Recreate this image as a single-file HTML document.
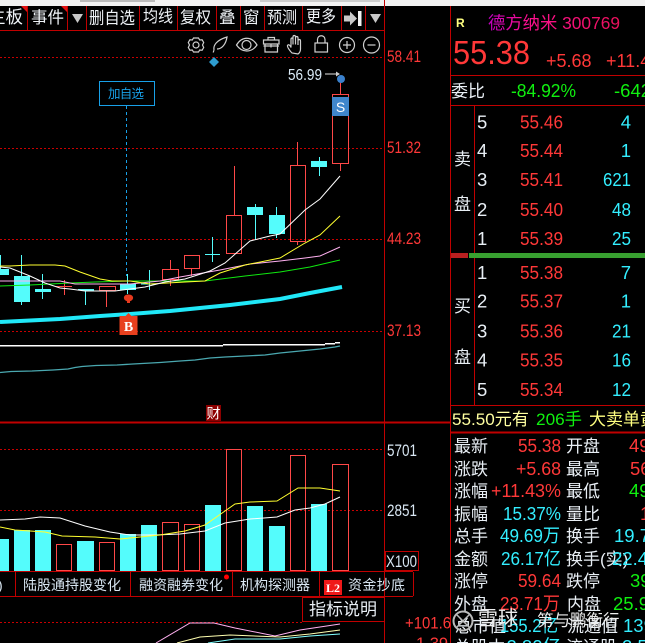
<!DOCTYPE html>
<html><head><meta charset="utf-8"><style>
html,body{margin:0;padding:0;background:#000;width:645px;height:643px;overflow:hidden}
svg{display:block}
text{font-family:"Liberation Sans","Noto Sans CJK SC",sans-serif}
.w{fill:#e8eef4}.r{fill:#ff3838}.c{fill:#33eeff}.g{fill:#10f010}.y{fill:#ffff80}
.t{font-size:16.5px;fill:#eef2f6}
.p{font-size:18.5px;fill:#ff3838}
.n{font-size:18.5px;fill:#e8eef4}
.q{font-size:18.5px;fill:#33eeff;text-anchor:end}
.l{font-size:17px;fill:#e8eef4}
.d{font-size:18.5px}
.v{font-size:18.5px;text-anchor:end}
.a{font-size:16.5px;fill:#ff3838}
.b{font-size:14px;fill:#d8e6f2}
.e{font-size:16.5px;fill:#d8e6f2}
.ln{stroke:#c00000;stroke-width:1;fill:none;shape-rendering:crispEdges}
.dot{stroke:#c80000;stroke-width:1;stroke-dasharray:2 2;fill:none;shape-rendering:crispEdges}
.h{fill:none;stroke:#ff4848;stroke-width:1;shape-rendering:crispEdges}
.k{fill:#54fcfc;shape-rendering:crispEdges}
.s{stroke:#54fcfc;stroke-width:1;shape-rendering:crispEdges}
.sr{stroke:#ff4848;stroke-width:1;shape-rendering:crispEdges}
.m{fill:none;stroke-width:1}
.i{fill:none;stroke:#d0d0d0;stroke-width:1.2}
</style></head><body>
<svg width="645" height="643" viewBox="0 0 645 643" xmlns="http://www.w3.org/2000/svg">
<rect width="645" height="643" fill="#000"/>
<rect width="645" height="6" fill="#f2f2f2"/>
<rect x="80" y="0" width="75" height="2" fill="#bbb"/><rect x="260" y="0" width="120" height="2" fill="#ccc"/>

<!-- toolbar -->
<path class="ln" d="M0 30.500H385M27.500 6V30M67.500 6V30M86.500 6V30M139.500 6V30M177.500 6V30M216.500 6V30M240.500 6V30M264.500 6V30M302.500 6V30M341.500 6V30M365.500 6V30"/>
<path d="M21 6h6v6zM61 6h6v6z" fill="#e01010"/>
<text class="t" x="-12" y="23" style="font-size:17.500px">主板</text>
<text class="t" x="31" y="23">事件</text>
<path d="M72 14h11l-5.500 9z" fill="#c8c8c8"/>
<text class="t" x="89" y="23.500" textLength="46" lengthAdjust="spacingAndGlyphs">删自选</text>
<text class="t" x="143" y="22" textLength="30" lengthAdjust="spacingAndGlyphs">均线</text>
<text class="t" x="180" y="23" textLength="31" lengthAdjust="spacingAndGlyphs">复权</text>
<text class="t" x="219" y="23">叠</text>
<text class="t" x="243" y="23">窗</text>
<text class="t" x="267" y="23" textLength="30" lengthAdjust="spacingAndGlyphs">预测</text>
<text class="t" x="306" y="22" textLength="30" lengthAdjust="spacingAndGlyphs">更多</text>
<path d="M344 15.500h6V11.500l7 7-7 7v-4h-6z" fill="#c8c8c8"/><rect x="358" y="11" width="3.500" height="15" fill="#f0f0f0"/>
<path d="M370 14h11l-5.500 9z" fill="#c8c8c8"/>

<!-- axes -->
<path class="ln" d="M384.500 0V643M450.500 6V643M474.500 105V405"/>
<path d="M0 422.500H450" stroke="#c00000" stroke-width="2"/>
<path class="dot" d="M0 57.500H385M0 148.500H385M0 239.500H385M0 331.500H385M0 449.500H385M0 510.500H385M0 622.500H302"/>

<!-- chart icons -->
<g class="i">
<path d="M193.500 38h5l1.200 2 2.400-.2 1.600 2.700-1.200 2.500 1.200 2.500-1.600 2.700-2.400-.2-1.200 2h-5l-1.200-2-2.400.2-1.600-2.700 1.200-2.500-1.200-2.500 1.600-2.700 2.400.2z"/><circle cx="196" cy="45" r="3"/>
<path d="M214 50c-1-5 3-10 13-13-1 7-5 12-10 12M214 50l-.8 2.500"/>
<path d="M236.500 45c5.500-9 15-9 20.500 0-5.500 8-15 8-20.500 0z"/><circle cx="246.500" cy="45" r="4.500"/>
<path d="M263.500 40h15.500v4h-15.500zM265 44v8h12.500v-8M268 40v-2.500h6.500v2.500M263.500 46h15.500M271 44v3.500"/>
<path d="M292 53c-2-2-5-6-4.500-7.500 1-1.500 2.500-.5 3.500 2v-8c0-2 2-2 2 0v5-7.500c0-2 2.500-2 2.500 0v7.500-6.500c0-2 2.500-2 2.500 0v7-4c0-2 2.500-2 2.500 0v8c0 2-1 4-2.500 5z"/>
<rect x="315" y="43" width="12.500" height="9"/><path d="M317.500 43v-3.500c0-5 7.500-5 7.500 0v3.500"/>
<circle cx="347" cy="45" r="7.500"/><path d="M343 45h8M347 41v8"/>
<circle cx="371.500" cy="45" r="8"/><path d="M367.500 45h8"/>
</g>
<path d="M214 57l5 5-5 5-5-5z" fill="#2e9ccf"/>

<!-- axis labels -->
<text class="a" x="387" y="62" textLength="34" lengthAdjust="spacingAndGlyphs">58.41</text>
<text class="a" x="387" y="153" textLength="34" lengthAdjust="spacingAndGlyphs">51.32</text>
<text class="a" x="387" y="244" textLength="34" lengthAdjust="spacingAndGlyphs">44.23</text>
<text class="a" x="387" y="336" textLength="34" lengthAdjust="spacingAndGlyphs">37.13</text>
<text class="e" x="387" y="456" textLength="30" lengthAdjust="spacingAndGlyphs">5701</text>
<text class="e" x="387" y="516" textLength="30" lengthAdjust="spacingAndGlyphs">2851</text>
<rect x="385.500" y="551.500" width="33" height="19" class="ln"/>
<text class="e" x="386" y="567" textLength="31" lengthAdjust="spacingAndGlyphs">X100</text>

<!-- marker -->
<rect x="99.500" y="81.500" width="55" height="24" fill="#000" stroke="#18a0e8"/>
<text x="108" y="98" style="font-size:12.500px;fill:#18a0e8" textLength="36">加自选</text>
<path d="M126.500 106V276" stroke="#18a0e8" stroke-dasharray="3 3" fill="none"/>
<text x="288" y="80" style="font-size:15.500px;fill:#dcecf8" textLength="34" lengthAdjust="spacingAndGlyphs">56.99</text>
<path d="M325 74h11" stroke="#999" stroke-width="1.500"/><path d="M336 71.500l4 2.500-4 2.500z" fill="#ccc"/>

<!-- candles -->
<g>
<path class="s" d="M.5 255V275M21.500 255V305M42.500 274V299M85.500 289V305M127.500 274V294M149.500 270V290M141 284H157M212.500 237V262M205 254.500H220M255.500 204V240M276.500 207V238M319.500 157V176"/>
<path class="sr" d="M64.500 280V295M56 286.500H72M106.500 290V307M170.500 260V269M170.500 279V286M191.500 268V276M234.500 166V216M297.500 142V165M297.500 241V245M340.500 78V95M340.500 164V171"/>
<rect class="k" x="0" y="269" width="9" height="6"/>
<rect class="k" x="14" y="276" width="16" height="26"/>
<rect class="k" x="35" y="289" width="16" height="3"/>
<rect class="k" x="78" y="289" width="16" height="1.500"/>
<rect class="k" x="120" y="284" width="16" height="6"/>
<rect class="k" x="247" y="207" width="16" height="8"/>
<rect class="k" x="269" y="215" width="16" height="19"/>
<rect class="k" x="311" y="161" width="16" height="6"/>
<rect class="h" x="99.500" y="286.500" width="16" height="4"/>
<rect class="h" x="162.500" y="269.500" width="16" height="10"/>
<rect class="h" x="184.500" y="255.500" width="15" height="13"/>
<rect class="h" x="226.500" y="215.500" width="15" height="38"/>
<rect class="h" x="290.500" y="165.500" width="15" height="76"/>
<rect class="h" x="332.500" y="94.500" width="16" height="69"/>
</g>

<!-- MAs -->
<polyline class="m" stroke="#20e8f8" style="stroke-width:4" points="0,322 20,321 60,319 100,316 130,314 170,311 230,305 280,299 310,293 342,287"/>
<polyline class="m" stroke="#10e810" points="0,286 30,285 50,284 70,283 95,282 130,281 170,281 205,281 245,276 280,272 310,267 340,260"/>
<polyline class="m" stroke="#ffb0f0" points="0,281 60,281 75,284 100,284 130,284 160,281 180,277 220,270 250,264 280,261 305,258 320,256 340,247"/>
<polyline class="m" stroke="#ffff30" points="0,266 10,266 30,265 55,265 65,266 80,272 100,279 112,281 130,281 150,284 185,282 205,281 220,273 245,265 280,258 305,243 320,235 340,216"/>
<polyline class="m" stroke="#fff" points="0,267 10,268 20,272 30,276 45,283 60,288 70,289 85,291 100,291 115,291 130,289 145,287 165,282 185,279 210,271 225,263 250,241 270,236 280,234 305,210 320,199 340,176"/>
<path d="M0 345.500H223M223 344.500H325M325 343.500H335M335 342.500H340" stroke="#fff" stroke-width="1.500" shape-rendering="crispEdges"/>
<polyline class="m" stroke="#4aa8b0" style="stroke-width:1.300" points="0,372.500 11,371.500 32,371 53,370 68,369 75,367.500 82,366.500 96,365.500 117,365 133,364 160,362.500 180,361 195,360 210,358 225,357 245,356 265,355 280,353 300,351 320,349 335,347 340,346"/>

<!-- badges -->
<circle cx="341" cy="79" r="4" fill="#3a80cc"/>
<rect x="332" y="97" width="17" height="19" fill="#3f86cc"/>
<text x="340.500" y="112" text-anchor="middle" style="font-size:14px;fill:#fff">S</text>
<path d="M128.500 294.500c-3.500 0-5 2-4.500 4 .4 1.600 2 2.500 3 2.700v1.800h3v-1.800c1-.2 2.600-1.100 3-2.700.5-2-1-4-4.500-4z" fill="#e63a1e"/>
<path d="M128.500 313l3 3h6v19h-18v-19h6z" fill="#e8401e"/>
<text x="128.500" y="331" text-anchor="middle" style="font-size:14px;font-weight:bold;fill:#fff;font-family:'Liberation Serif',serif">B</text>
<rect x="206" y="405" width="15" height="16" fill="#8c0000"/>
<text x="206.500" y="418.500" style="font-size:14px;fill:#fff">财</text>

<!-- volume -->
<rect class="k" x="0" y="539" width="9" height="32"/>
<rect class="k" x="14" y="530" width="16" height="41"/>
<rect class="k" x="35" y="530" width="16" height="41"/>
<rect class="k" x="77" y="541" width="17" height="30"/>
<rect class="k" x="120" y="534" width="16" height="37"/>
<rect class="k" x="141" y="525" width="16" height="46"/>
<rect class="k" x="205" y="505" width="16" height="66"/>
<rect class="k" x="247" y="506" width="16" height="65"/>
<rect class="k" x="269" y="526" width="16" height="45"/>
<rect class="k" x="311" y="504" width="16" height="67"/>
<rect class="h" x="56.500" y="544.500" width="15" height="26"/>
<rect class="h" x="99.500" y="542.500" width="15" height="28"/>
<rect class="h" x="162.500" y="522.500" width="16" height="48"/>
<rect class="h" x="184.500" y="524.500" width="15" height="46"/>
<rect class="h" x="226.500" y="449.500" width="15" height="121"/>
<rect class="h" x="290.500" y="455.500" width="15" height="115"/>
<rect class="h" x="332.500" y="464.500" width="16" height="106"/>
<polyline class="m" stroke="#fff" points="0,520 25,519 40,517 60,518 85,526 110,532 130,535 155,535 180,534 205,531 225,523 250,519 277,517 295,510 310,508 325,504 340,497"/>
<polyline class="m" stroke="#ffff30" points="0,527 15,530 45,532 62,536 95,537 120,539 140,537 160,535 185,531 205,525 215,518 235,504 250,502 277,501 298,488 320,488 340,491"/>

<!-- tab bar -->
<path class="ln" d="M0 571.500H413M0 596.500H413M15.500 572V596M130.500 572V596M232.500 572V596M319.500 572V596M413.500 572V596"/>
<text class="b" x="-2" y="590">)</text>
<text class="b" x="23" y="590" textLength="98">陆股通持股变化</text>
<text class="b" x="139" y="590" textLength="84">融资融券变化</text>
<circle cx="226.500" cy="577" r="2.500" fill="#f00"/>
<text class="b" x="240" y="590" textLength="70">机构探测器</text>
<rect x="324" y="580" width="18" height="15" fill="#f01818"/>
<text x="326" y="592" style="font-size:12px;font-weight:bold;fill:#fff;font-family:'Liberation Serif',serif">L2</text>
<text class="b" x="348" y="590" textLength="57">资金抄底</text>
<rect x="302.500" y="597.500" width="82" height="24" class="ln"/>
<text x="309" y="615" style="font-size:17px;fill:#e8eef4" textLength="68">指标说明</text>
<text class="a" x="405" y="628.500" textLength="46" lengthAdjust="spacingAndGlyphs">+101.6</text>
<text class="a" x="416" y="649">1.39</text>
<polyline class="m" stroke="#ffb0f0" points="156,643 190,623 214,623 235,628 275,636 300,630 340,624"/>
<polyline class="m" stroke="#ffffb0" points="177,643 200,637 230,635 280,637 310,634 340,630"/>
<polyline class="m" stroke="#80ffff" points="208,643 235,639 280,639 310,636 340,634"/>

<!-- right panel -->
<text x="456" y="27" style="font-size:12px;font-weight:bold;fill:#ffff80">R</text>
<defs><linearGradient id="gd" x1="488" x2="620" y1="0" y2="0" gradientUnits="userSpaceOnUse"><stop offset="0" stop-color="#c000c0"/><stop offset=".3" stop-color="#ff1090"/><stop offset="1" stop-color="#e8105a"/></linearGradient></defs>
<text x="488" y="29" style="font-size:17.500px;fill:url(#gd)" textLength="132" lengthAdjust="spacingAndGlyphs">德方纳米 300769</text>
<text x="453" y="64" style="font-size:33.500px;fill:#ff3838" textLength="77" lengthAdjust="spacingAndGlyphs">55.38</text>
<text x="546" y="67" style="font-size:18px;fill:#ff3838">+5.68</text>
<text x="606" y="67" style="font-size:18px;fill:#ff3838">+11.43%</text>
<path class="ln" d="M451 75.500H645M451 105.500H645M451 405.500H645"/>
<text x="451" y="97" style="font-size:17px;fill:#e8eef4">委比</text>
<text x="511" y="97" style="font-size:18.500px;fill:#10f010" textLength="65" lengthAdjust="spacingAndGlyphs">-84.92%</text>
<text x="614" y="97" style="font-size:18.500px;fill:#10f010">-642</text>

<text class="l" x="454" y="165">卖</text>
<text class="l" x="454" y="210">盘</text>
<text class="l" x="454" y="312">买</text>
<text class="l" x="454" y="363">盘</text>

<text class="n" x="477" y="128.500">5</text><text class="p" x="520" y="128.500" textLength="43" lengthAdjust="spacingAndGlyphs">55.46</text><text class="q" x="631" y="128.500">4</text>
<text class="n" x="477" y="157">4</text><text class="p" x="520" y="157" textLength="43" lengthAdjust="spacingAndGlyphs">55.44</text><text class="q" x="631" y="157">1</text>
<text class="n" x="477" y="186">3</text><text class="p" x="520" y="186" textLength="43" lengthAdjust="spacingAndGlyphs">55.41</text><text class="q" x="631" y="186" textLength="28" lengthAdjust="spacingAndGlyphs">621</text>
<text class="n" x="477" y="216">2</text><text class="p" x="520" y="216" textLength="43" lengthAdjust="spacingAndGlyphs">55.40</text><text class="q" x="631" y="216" textLength="19" lengthAdjust="spacingAndGlyphs">48</text>
<text class="n" x="477" y="245">1</text><text class="p" x="520" y="245" textLength="43" lengthAdjust="spacingAndGlyphs">55.39</text><text class="q" x="631" y="245" textLength="19" lengthAdjust="spacingAndGlyphs">25</text>
<rect x="451" y="253" width="17" height="5" fill="#b82020"/><rect x="469" y="253" width="176" height="5" fill="#38a030"/>
<text class="n" x="477" y="279">1</text><text class="p" x="520" y="279" textLength="43" lengthAdjust="spacingAndGlyphs">55.38</text><text class="q" x="631" y="279">7</text>
<text class="n" x="477" y="307.500">2</text><text class="p" x="520" y="307.500" textLength="43" lengthAdjust="spacingAndGlyphs">55.37</text><text class="q" x="631" y="307.500">1</text>
<text class="n" x="477" y="337.500">3</text><text class="p" x="520" y="337.500" textLength="43" lengthAdjust="spacingAndGlyphs">55.36</text><text class="q" x="631" y="337.500" textLength="19" lengthAdjust="spacingAndGlyphs">21</text>
<text class="n" x="477" y="366.500">4</text><text class="p" x="520" y="366.500" textLength="43" lengthAdjust="spacingAndGlyphs">55.35</text><text class="q" x="631" y="366.500" textLength="19" lengthAdjust="spacingAndGlyphs">16</text>
<text class="n" x="477" y="396">5</text><text class="p" x="520" y="396" textLength="43" lengthAdjust="spacingAndGlyphs">55.34</text><text class="q" x="631" y="396" textLength="19" lengthAdjust="spacingAndGlyphs">12</text>

<text x="452" y="425" style="font-size:17px;fill:#ffffa0" textLength="77" lengthAdjust="spacingAndGlyphs">55.50元有</text>
<text x="536" y="425" style="font-size:17px;fill:#10f010" textLength="46" lengthAdjust="spacingAndGlyphs">206手</text>
<text x="589" y="425" style="font-size:17px;fill:#ffff80">大卖单黄</text>
<path d="M451 432.500H645" stroke="#c00000" stroke-width="2"/>

<g>
<text class="l" x="454" y="452">最新</text><text class="v r" x="561" y="452" textLength="43" lengthAdjust="spacingAndGlyphs">55.38</text><text class="l" x="566" y="452">开盘</text><text class="d r" x="629" y="452">49.70</text>
<text class="l" x="454" y="475">涨跌</text><text class="v r" x="561" y="475" textLength="45" lengthAdjust="spacingAndGlyphs">+5.68</text><text class="l" x="566" y="475">最高</text><text class="d r" x="630" y="475">56.99</text>
<text class="l" x="454" y="497">涨幅</text><text class="v r" x="561" y="497" textLength="70" lengthAdjust="spacingAndGlyphs">+11.43%</text><text class="l" x="566" y="497">最低</text><text class="d g" x="629" y="497">49.35</text>
<text class="l" x="454" y="520">振幅</text><text class="v c" x="561" y="520" textLength="58" lengthAdjust="spacingAndGlyphs">15.37%</text><text class="l" x="566" y="520">量比</text><text class="d r" x="640" y="520">1.55</text>
<text class="l" x="454" y="542">总手</text><text class="v c" x="560" y="542" textLength="60" lengthAdjust="spacingAndGlyphs">49.69万</text><text class="l" x="566" y="542">换手</text><text class="d c" x="614" y="542">19.7</text>
<text class="l" x="454" y="565">金额</text><text class="v c" x="561" y="565" textLength="60" lengthAdjust="spacingAndGlyphs">26.17亿</text><text class="l" x="566" y="565">换手(实)</text><text class="d c" x="612" y="565">22.4</text>
<text class="l" x="454" y="587">涨停</text><text class="v r" x="561" y="587" textLength="43" lengthAdjust="spacingAndGlyphs">59.64</text><text class="l" x="566" y="587">跌停</text><text class="d g" x="630" y="587">39.76</text>
<text class="l" x="454" y="610">外盘</text><text class="v r" x="560" y="610" textLength="60" lengthAdjust="spacingAndGlyphs">23.71万</text><text class="l" x="567" y="610">内盘</text><text class="d g" x="613" y="610">25.9</text>
<text class="l" x="455" y="632">总市值</text><text class="v c" x="558" y="632" textLength="58" lengthAdjust="spacingAndGlyphs">155.2亿</text><text class="l" x="567" y="632">流通值</text><text class="d c" x="623" y="632">139.</text>
<text class="l" x="454" y="653">总股本</text><text class="v c" x="561" y="653">2.80亿</text><text class="l" x="566" y="653">流通股</text><text class="d c" x="622" y="653">2.52</text>
</g>

<!-- watermark -->
<g>
<circle cx="463" cy="621" r="9.500" fill="none" stroke="#bbb" stroke-width="2"/>
<path d="M457 615l12 12M469 615l-12 12" stroke="#bbb" stroke-width="1.500"/>
<text x="478" y="625" style="font-size:20px;fill:#eee">雪球</text>
<text x="537" y="626" style="font-size:16.500px;fill:#eee">第与鹏衡行</text>
</g>
</svg>
</body></html>
